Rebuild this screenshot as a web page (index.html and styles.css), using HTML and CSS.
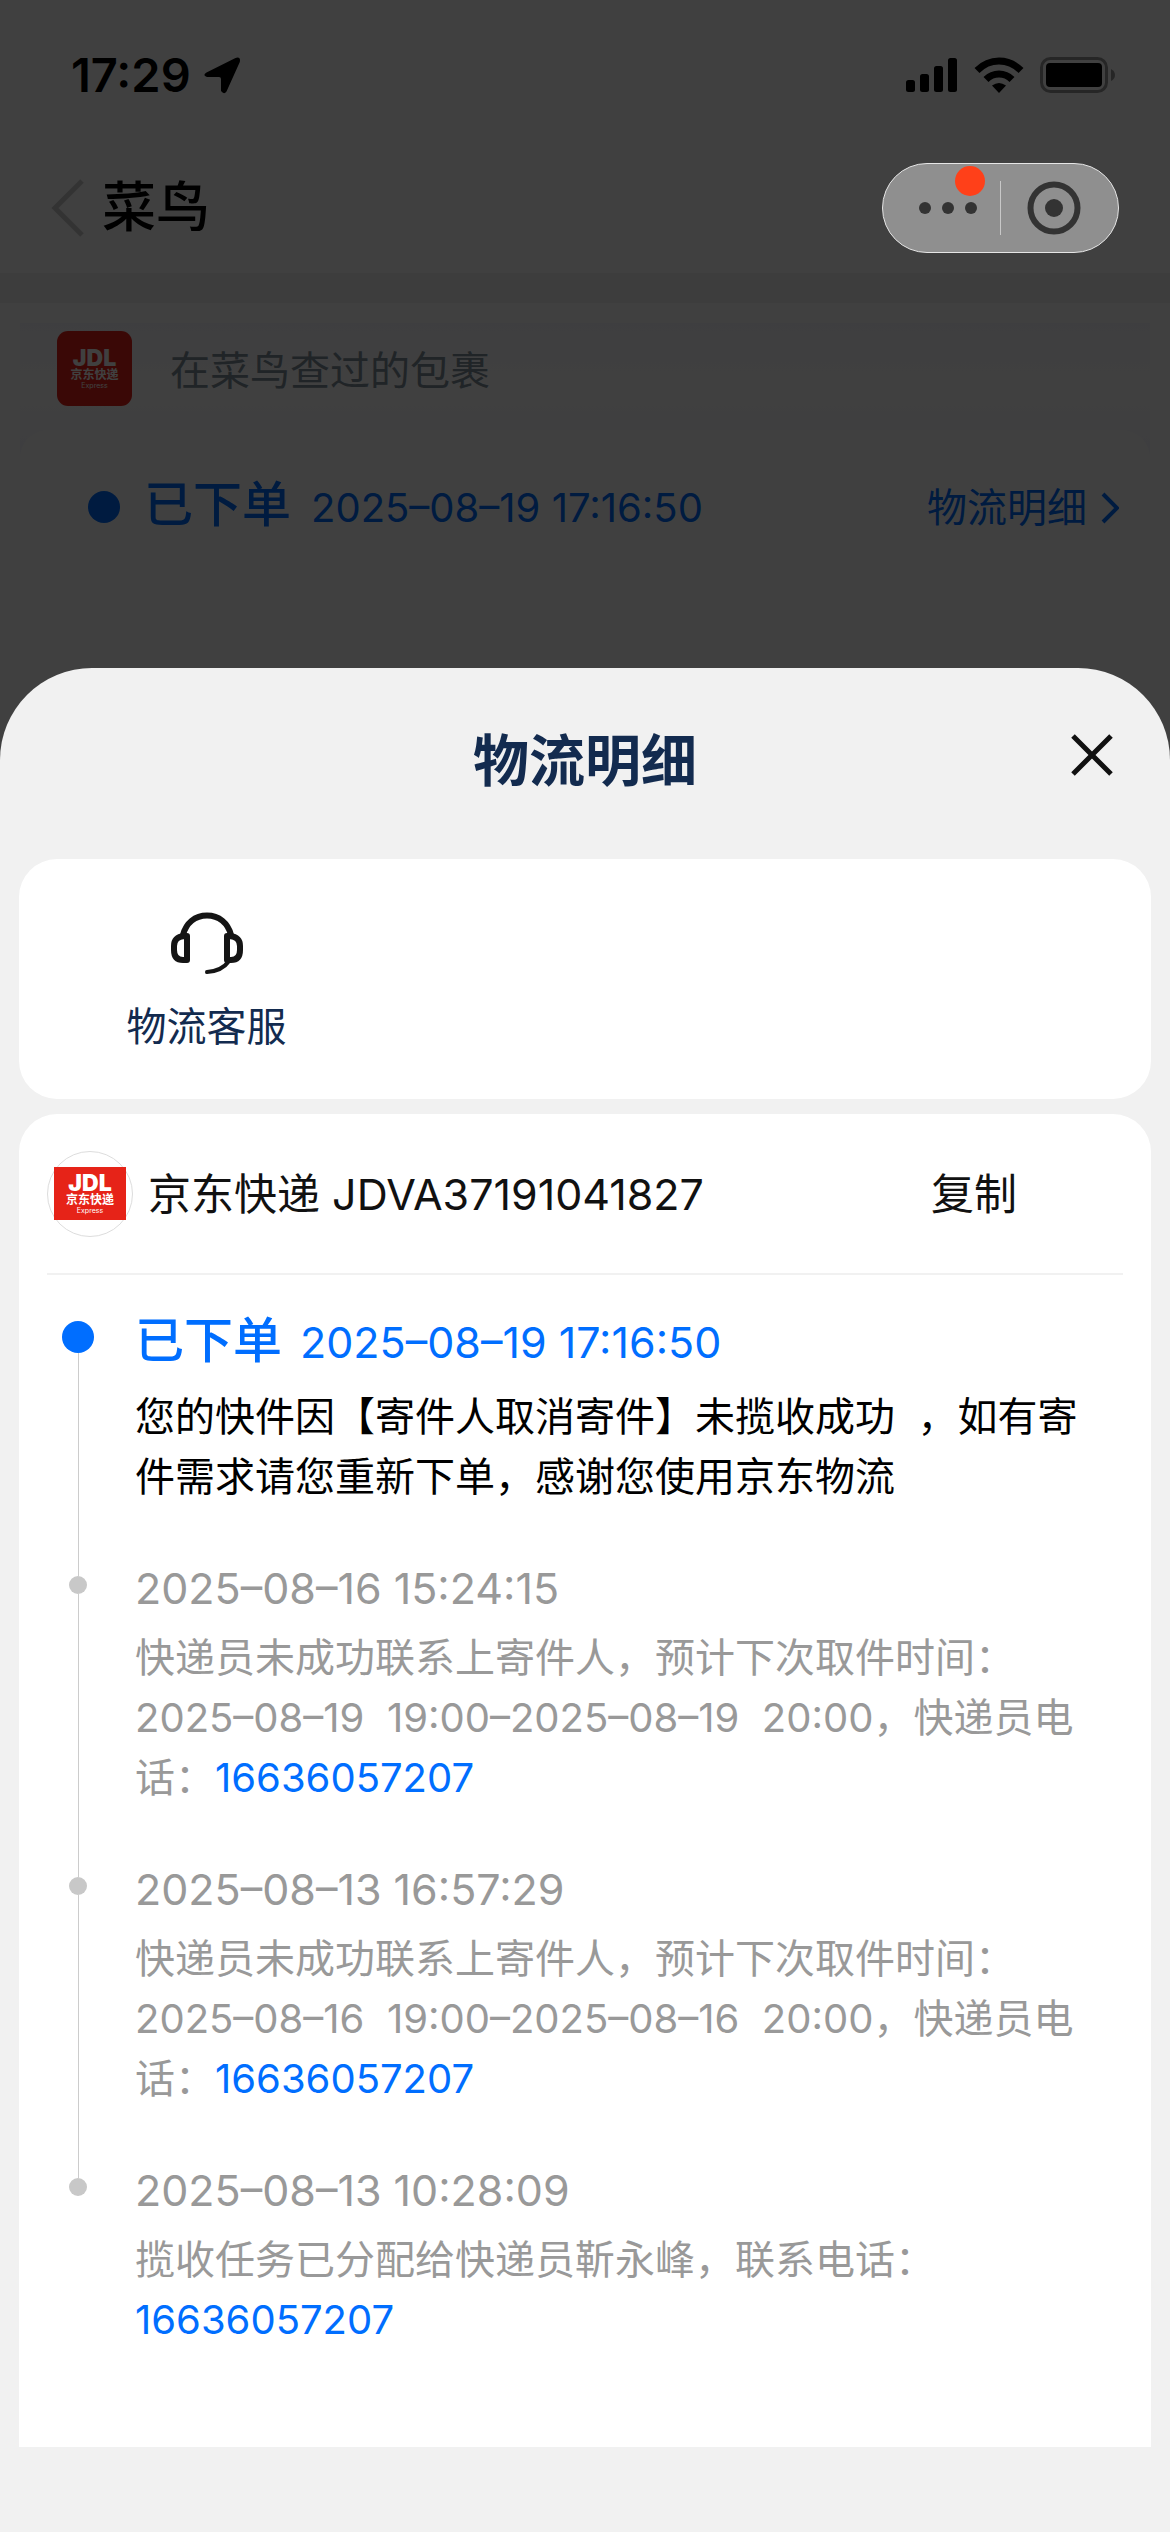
FILE: index.html
```html
<!DOCTYPE html>
<html lang="zh-CN">
<head>
<meta charset="utf-8">
<meta name="viewport" content="width=device-width, initial-scale=1">
<title>物流明细</title>
<link rel="stylesheet" href="styles.css">
</head>
<body>
<div class="screen">
  <div class="page">
    <div class="status">
      <span class="status-time">17:29</span>
      <svg class="status-location" width="37" height="37" viewBox="0 0 37 37" aria-hidden="true"><path d="M2.500 15.500 31 1.200Q37-1 35.800 5L22.500 34.500Q20 38 17 34V22Q17 20 15 20H3Q-2 18.500 2.500 15.500Z"/></svg>
      <div class="status-icons">
        <svg width="52" height="36" viewBox="0 0 52 36" aria-hidden="true"><rect x="0" y="23" width="9" height="12" rx="2.500"/><rect x="14" y="17" width="9" height="18" rx="2.500"/><rect x="28" y="9" width="9" height="26" rx="2.500"/><rect x="42" y="1" width="9" height="34" rx="2.500"/></svg>
        <svg width="50" height="38" viewBox="0 0 50 38" aria-hidden="true"><g fill="none" stroke="#000" stroke-width="7"><path d="M3 14.500Q12.500 5 25 5T47 14.500"/><path d="M12 23.500Q17.500 18 25 18T38 23.500"/></g><path d="M18 29.500Q25 24.500 32 29.500L25 37Z"/></svg>
        <svg width="76" height="36" viewBox="0 0 76 36" aria-hidden="true"><rect x="1.500" y="1.500" width="65" height="33" rx="9" fill="none" stroke="#999" stroke-width="3"/><rect x="6" y="6" width="56" height="24" rx="4"/><path d="M71 12Q75 14 75 18T71 24Z" fill="#999"/></svg>
      </div>
    </div>
    <header class="nav">
      <button class="nav-back" type="button" aria-label="返回"><svg width="34" height="58" viewBox="0 0 34 58"><path d="M31 2 4 29 31 56" fill="none" stroke="#ccc" stroke-width="5"/></svg></button>
      <h1 class="nav-title">菜鸟</h1>
      <div class="capsule">
        <button class="capsule-more" type="button" aria-label="更多"><svg width="58" height="12" viewBox="0 0 58 12"><circle cx="6" cy="6" r="6"/><circle cx="29" cy="6" r="6"/><circle cx="52" cy="6" r="6"/></svg><span class="capsule-badge"></span></button>
        <button class="capsule-close" type="button" aria-label="关闭小程序"><svg width="54" height="54" viewBox="0 0 54 54"><circle cx="27" cy="27" r="23.500" fill="none" stroke="#333" stroke-width="6"/><circle cx="27" cy="27" r="9"/></svg></button>
      </div>
    </header>
    <section class="parcel">
      <div class="parcel-source">
        <div class="jdl jdl-square"><span class="jdl-mark">JDL</span><span class="jdl-name">京东快递</span><span class="jdl-sub">Express</span></div>
        <span>在菜鸟查过的包裹</span>
      </div>
      <div class="parcel-status">
        <span class="dot dot-current"></span>
        <strong class="state">已下单</strong>
        <time class="parcel-time">2025–08–19 17:16:50</time>
        <a class="parcel-link" href="#detail">物流明细<svg width="18" height="32" viewBox="0 0 18 32" aria-hidden="true"><path d="M2 2 16 16 2 30" fill="none" stroke="#006eff" stroke-width="4"/></svg></a>
      </div>
    </section>
  </div>

  <div class="overlay">
    <section class="sheet" id="detail" role="dialog" aria-labelledby="sheet-title">
      <header class="sheet-head">
        <h2 class="sheet-title" id="sheet-title">物流明细</h2>
        <button class="sheet-close" type="button" aria-label="关闭"><svg width="42" height="42" viewBox="0 0 42 42"><path d="M2 2 40 40M40 2 2 40" stroke="#111" stroke-width="5"/></svg></button>
      </header>

      <nav class="card services">
        <a class="service" href="#service">
          <svg width="72" height="64" viewBox="0 0 72 64" fill="none" stroke="#151515" stroke-width="6" stroke-linejoin="round" stroke-linecap="round" aria-hidden="true"><path d="M12 23C15 11 24 3.500 36 3.500S57 11 60 23"/><path d="M16 24H13Q3 25 3 34V38Q3 48 12 48H16Z"/><path d="M56 24H59Q69 25 69 34V38Q69 48 60 48H56Z"/><path d="M58 49Q51 59 36 60" stroke-width="4"/></svg>
          <span>物流客服</span>
        </a>
      </nav>

      <section class="card tracking">
        <div class="waybill">
          <div class="waybill-logo"><div class="jdl jdl-wide"><span class="jdl-mark">JDL</span><span class="jdl-name">京东快递</span><span class="jdl-sub">Express</span></div></div>
          <span>京东快递 JDVA37191041827</span>
          <button class="copy" type="button">复制</button>
        </div>
        <ol class="timeline">
          <li class="event event-current">
            <div class="marker"><span class="dot dot-current"></span></div>
            <div class="event-body">
              <div class="event-head"><strong class="state">已下单</strong><time>2025–08–19 17:16:50</time></div>
              <p class="event-text">您的快件因【寄件人取消寄件】未揽收成功&nbsp;&nbsp;，如有寄件需求请您重新下单，感谢您使用京东物流</p>
            </div>
          </li>
          <li class="event">
            <div class="marker"><span class="dot"></span></div>
            <div class="event-body">
              <div class="event-head"><time>2025–08–16 15:24:15</time></div>
              <p class="event-text">快递员未成功联系上寄件人，预计下次取件时间：2025–08–19&nbsp;&nbsp;19:00–2025–08–19&nbsp;&nbsp;20:00，快递员电话：<a href="tel:16636057207">16636057207</a></p>
            </div>
          </li>
          <li class="event">
            <div class="marker"><span class="dot"></span></div>
            <div class="event-body">
              <div class="event-head"><time>2025–08–13 16:57:29</time></div>
              <p class="event-text">快递员未成功联系上寄件人，预计下次取件时间：2025–08–16&nbsp;&nbsp;19:00–2025–08–16&nbsp;&nbsp;20:00，快递员电话：<a href="tel:16636057207">16636057207</a></p>
            </div>
          </li>
          <li class="event">
            <div class="marker"><span class="dot"></span></div>
            <div class="event-body">
              <div class="event-head"><time>2025–08–13 10:28:09</time></div>
              <p class="event-text">揽收任务已分配给快递员靳永峰，联系电话：<a href="tel:16636057207">16636057207</a></p>
            </div>
          </li>
        </ol>
      </section>
    </section>
  </div>
</div>
</body>
</html>
```
FILE: styles.css
```css
* { box-sizing: border-box; margin: 0; padding: 0; }

body {
  font-family: Inter, "Noto Sans CJK SC", sans-serif;
  font-size: 40px;
  line-height: 60px;
  color: #000;
  background: #fff;
}

button { font: inherit; color: inherit; background: none; border: 0; cursor: pointer; }
a { color: #006eff; text-decoration: none; }
svg { display: block; flex: none; }
ol { list-style: none; }

/* The page and its dimming overlay share one grid cell. */
.screen { display: grid; grid-template-columns: minmax(0, 1fr); min-height: 100vh; }
.page, .overlay { grid-area: 1 / 1; }

/* Status bar */
.status { display: flex; align-items: center; height: 150px; padding: 0 54px 0 71px; }
.status-time { font-size: 47px; font-weight: 600; }
.status-location { margin-left: 13px; }
.status-icons { display: flex; align-items: center; gap: 16px; margin-left: auto; }

/* Navigation bar */
.nav { display: flex; align-items: center; height: 123px; padding: 0 51px 8px 51px; }
.nav-title { margin-left: 17px; font-size: 54px; font-weight: 500; }
.capsule {
  position: relative;
  z-index: 2;
  display: flex;
  align-items: center;
  width: 237px;
  height: 90px;
  margin-left: auto;
  border: 1px solid #e6e6e6;
  border-radius: 45px;
  background: #8f8f8f;
}
.capsule svg { fill: #333; }
.capsule-more, .capsule-close { display: flex; flex: 1; align-items: center; justify-content: center; height: 54px; }
.capsule-more { position: relative; padding-left: 12px; border-right: 1px solid #c8c8c8; }
.capsule-close { padding-right: 12px; }
.capsule-badge { position: absolute; top: -15px; right: 15px; width: 30px; height: 30px; border-radius: 50%; background: #ff4019; }

/* Parcel card behind the sheet */
.parcel { padding: 20px 20px 0; border-top: 30px solid #f1f1f1; }
.parcel-source {
  display: flex;
  align-items: center;
  gap: 38px;
  height: 135px;
  padding: 0 37px 44px;
  color: #80909a;
  background: linear-gradient(#f8f8ff, #fff 50%, #f6f6ff);
}
.parcel-source > span { padding-top: 4px; }
.parcel-status {
  display: flex;
  align-items: baseline;
  margin-top: -28px;
  padding: 45px 31px 0 68px;
  border-radius: 28px 28px 0 0;
  color: #006eff;
  background: #fff;
}
.parcel-status .dot { align-self: center; }
.parcel-status .state { margin-left: 24px; }
.parcel-time { margin-left: 20px; }
.parcel-link { display: flex; align-items: center; gap: 14px; margin-left: auto; }

.state { font-size: 49px; font-weight: 500; }
.dot { width: 18px; height: 18px; flex: none; border-radius: 50%; background: #c8c8c8; }
.dot-current { width: 32px; height: 32px; background: #006eff; }

/* Courier logo */
.jdl { display: flex; flex: none; flex-direction: column; align-items: center; justify-content: center; color: #fff; background: #e62318; }
.jdl-square { width: 75px; height: 75px; border-radius: 11px; }
.jdl-wide { width: 72px; height: 53px; }
.jdl-mark { font-size: 23px; font-weight: 900; line-height: 20px; }
.jdl-name { font-size: 12px; font-weight: 700; line-height: 14px; }
.jdl-sub { font-size: 7px; line-height: 8px; }

/* Bottom sheet */
.overlay { z-index: 1; display: flex; flex-direction: column; padding-top: 668px; background: rgba(0, 0, 0, 0.75); }
.sheet { flex: 1; padding: 0 19px 80px; border-radius: 92px 92px 0 0; background: #f1f1f1; }
.sheet-head { display: grid; grid-template-columns: 1fr auto 1fr; align-items: center; height: 191px; padding: 0 38px 6px; }
.sheet-title { grid-column: 2; font-size: 56px; font-weight: 700; color: #132b4f; }
.sheet-close { justify-self: end; padding-bottom: 12px; }

.card { border-radius: 38px; background: #fff; }

.services { display: flex; height: 240px; }
.service { display: flex; flex-direction: column; align-items: center; gap: 21px; width: 375px; padding-top: 53px; color: #132b4f; }

.tracking { margin-top: 15px; padding: 0 28px 46px; border-radius: 38px 38px 0 0; }
.waybill { display: flex; align-items: center; height: 161px; border-bottom: 2px solid #f1f1f1; font-size: 43px; color: #111; }
.waybill-logo { display: flex; align-items: center; justify-content: center; width: 86px; height: 86px; margin-right: 15px; border: 1px solid #ddd; border-radius: 50%; }
.copy { margin-left: auto; padding-right: 106px; }

/* Timeline */
.timeline { padding: 36px 18px 0 13px; }
.event { display: grid; grid-template-columns: 36px minmax(0, 1fr); column-gap: 39px; color: #999; }
.event-current { color: #000; }
.marker { display: flex; flex-direction: column; align-items: center; }
.marker::before, .marker::after { content: ""; width: 1px; background: #ccc; }
.marker::before { height: 18px; }
.marker::after { flex: 1; }
.event:first-child .marker::before { height: 10px; background: none; }
.event:last-child .marker::after { background: none; }
.event-body { padding-bottom: 51px; }
.event-head { display: flex; align-items: baseline; gap: 18px; margin-bottom: 10px; font-size: 43px; }
.event-current .event-head { margin-bottom: 15px; color: #006eff; }
```
